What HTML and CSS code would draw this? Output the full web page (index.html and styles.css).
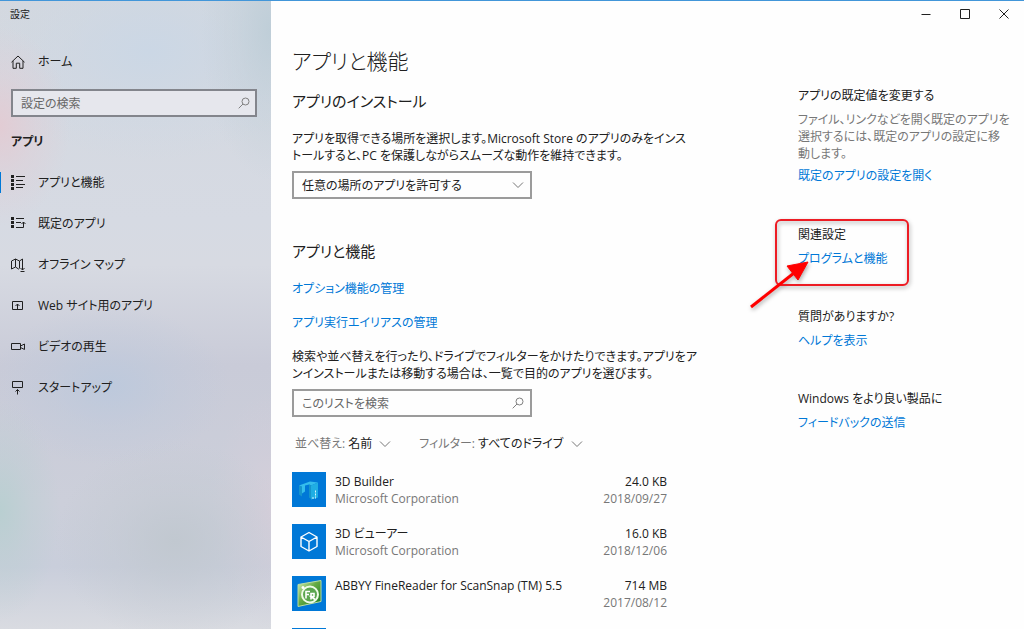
FILE: index.html
```
<!DOCTYPE html>
<html lang="ja">
<head>
<meta charset="utf-8">
<meta name="viewport" content="width=device-width, initial-scale=1">
<title>設定</title>
<link rel="stylesheet" href="styles.css">
</head>
<body>
<div class="window">
  <aside class="sidebar">
    <div class="window-title">設定</div>
    <a class="nav-link home" href="#">
      <svg class="icon" viewBox="0 0 16 16"><path d="M1.500 8.200 8 2l6.500 6.200M3 7v7.300h3.300V9.200h3.400v5.100H13V7"/></svg>
      <span>ホーム</span>
    </a>
    <label class="search side-search">
      <input type="search" placeholder="設定の検索" aria-label="設定の検索">
      <svg class="search-icon" viewBox="0 0 12 12"><circle cx="7.500" cy="4.500" r="3.500"/><path d="M5 7 .7 11.300"/></svg>
    </label>
    <h2 class="nav-title">アプリ</h2>
    <nav class="nav">
      <a class="nav-link current" href="#">
        <svg class="icon" viewBox="0 0 16 16"><path d="M6 1.500h9M6 5.500h7M6 9.500h9M6 12.500h7"/><path class="dots" d="M2.500 0v15"/></svg>
        <span>アプリと機能</span>
      </a>
      <a class="nav-link" href="#">
        <svg class="icon" viewBox="0 0 16 16"><path d="M6 2.500h8M6 6.500h5M6 11.500h7.500V6M11.500 8l2-2 2 2"/><path class="dots" d="M2.500 1v12"/></svg>
        <span>既定のアプリ</span>
      </a>
      <a class="nav-link" href="#">
        <svg class="icon" viewBox="0 0 16 16"><path d="M9.500 11.500 8.500 12l-3-2-4 2V4l4-2 4 2 3-2v6M5.500 2v8M9.500 4v7M12.500 6v7M10.500 11l2 2 2-2M10.500 14.500h4"/></svg>
        <span>オフライン マップ</span>
      </a>
      <a class="nav-link" href="#">
        <svg class="icon" viewBox="0 0 16 16"><path d="M2.500 3.500h10v8h-10zM7.500 11V6M5.500 8l2-2 2 2"/></svg>
        <span>Web サイト用のアプリ</span>
      </a>
      <a class="nav-link" href="#">
        <svg class="icon" viewBox="0 0 16 16"><path d="M1.500 4.500h9v6h-9zM10.500 7l4-2v5.500l-4-2"/></svg>
        <span>ビデオの再生</span>
      </a>
      <a class="nav-link" href="#">
        <svg class="icon" viewBox="0 0 16 16"><path d="M2.500 1.500h10v6h-10zM7.500 14.500v-5M5.500 11.500l2-2 2 2"/></svg>
        <span>スタートアップ</span>
      </a>
    </nav>
  </aside>

  <div class="page">
    <div class="caption">
      <button type="button" aria-label="最小化"><svg viewBox="0 0 10 10"><path d="M.5 5.500h9"/></svg></button>
      <button type="button" aria-label="最大化"><svg viewBox="0 0 10 10"><path d="M.5.500h9v9h-9z"/></svg></button>
      <button type="button" aria-label="閉じる"><svg viewBox="0 0 10 10"><path d="m.5.500 9 9m0-9-9 9"/></svg></button>
    </div>
    <div class="columns">
      <main class="content">
        <h1>アプリと機能</h1>
        <h2>アプリのインストール</h2>
        <p>アプリを取得できる場所を選択します。Microsoft Store のアプリのみをインス<br>トールすると、PC を保護しながらスムーズな動作を維持できます。</p>
        <div class="select-box">
          <select aria-label="アプリの入手元"><option>任意の場所のアプリを許可する</option></select>
          <svg class="chevron" viewBox="0 0 12 8"><path d="m1 1.500 5 5 5-5"/></svg>
        </div>
        <h2 class="features">アプリと機能</h2>
        <a class="link" href="#">オプション機能の管理</a>
        <a class="link" href="#">アプリ実行エイリアスの管理</a>
        <p>検索や並べ替えを行ったり、ドライブでフィルターをかけたりできます。アプリをア<br>ンインストールまたは移動する場合は、一覧で目的のアプリを選びます。</p>
        <label class="search list-search">
          <input type="search" placeholder="このリストを検索" aria-label="このリストを検索">
          <svg class="search-icon" viewBox="0 0 12 12"><circle cx="7.500" cy="4.500" r="3.500"/><path d="M5 7 .7 11.300"/></svg>
        </label>
        <div class="filters">
          <label class="filter">並べ替え:
            <select><option>名前</option></select>
            <svg class="chevron" viewBox="0 0 12 8"><path d="m1 1.500 5 5 5-5"/></svg>
          </label>
          <label class="filter">フィルター:
            <select><option>すべてのドライブ</option></select>
            <svg class="chevron" viewBox="0 0 12 8"><path d="m1 1.500 5 5 5-5"/></svg>
          </label>
        </div>
        <ul class="apps">
          <li>
            <svg class="tile" viewBox="0 0 34 34"><path fill="#1595cd" d="m7 13 3 1v10l-3-2z"/><path fill="#35bdec" d="m7 13 11-4 8 1-7 3-2-1-4 1v6l-3 2v-7z"/><path fill="#1595cd" d="m17 12 3 1v14l-3-2z"/><path fill="#20aee3" d="m19 13 7-3v15l-7 2z"/><path stroke="#d5f6ff" stroke-dasharray="2 1" d="M23.500 18v7M20 25.500h4"/></svg>
            <div class="app-name">3D Builder<small>Microsoft Corporation</small></div>
            <div class="app-size">24.0 KB<small>2018/09/27</small></div>
          </li>
          <li>
            <svg class="tile" viewBox="0 0 34 34"><path fill="none" stroke="#fff" stroke-width="1.400" stroke-linejoin="round" d="m17 8 8 4.500v9.500l-8 4.500L9 22v-9.500zM9 12.500l8 4.500 8-4.500M17 17v9.500"/></svg>
            <div class="app-name">3D ビューアー<small>Microsoft Corporation</small></div>
            <div class="app-size">16.0 KB<small>2018/12/06</small></div>
          </li>
          <li>
            <svg class="tile" viewBox="0 0 34 34">
              <defs><linearGradient id="green" x1="0" y1="0" x2="1" y2="1"><stop offset="0" stop-color="#d5eeb5"/><stop offset=".45" stop-color="#65ab45"/><stop offset="1" stop-color="#17751f"/></linearGradient></defs>
              <path fill="url(#green)" stroke="#b9dda4" d="m6 8 23-4v21L6 30z"/>
              <circle cx="18" cy="18" r="8" fill="#5ba650" stroke="#eefbe7" stroke-width="2"/>
              <circle cx="11" cy="11" r="1.500" fill="#fff"/>
              <path fill="none" stroke="#fff" stroke-width="1.600" d="M14 22v-7h4M14 18h3M19 23v-6h3v3h-3l4 3"/>
            </svg>
            <div class="app-name">ABBYY FineReader for ScanSnap (TM) 5.5</div>
            <div class="app-size">714 MB<small>2017/08/12</small></div>
          </li>
          <li><svg class="tile" viewBox="0 0 34 34"></svg></li>
        </ul>
      </main>

      <aside class="related">
        <section>
          <h3>アプリの既定値を変更する</h3>
          <p>ファイル、リンクなどを開く既定のアプリを<br>選択するには、既定のアプリの設定に移<br>動します。</p>
          <a class="link" href="#">既定のアプリの設定を開く</a>
        </section>
        <section class="marked">
          <h3>関連設定</h3>
          <a class="link" href="#">プログラムと機能</a>
          <svg class="annotation" viewBox="0 0 166 96"><rect x="28" y="5" width="132" height="65" rx="5"/><path class="shaft" d="m3 92 43-34"/><path class="head" d="m60 47-10 18-11-14z"/></svg>
        </section>
        <section>
          <h3>質問がありますか?</h3>
          <a class="link" href="#">ヘルプを表示</a>
        </section>
        <section>
          <h3>Windows をより良い製品に</h3>
          <a class="link" href="#">フィードバックの送信</a>
        </section>
      </aside>
    </div>
  </div>
</div>
</body>
</html>
```
FILE: styles.css
```
* { box-sizing: border-box; }

body {
  margin: 0;
  background: #fefefe;
  color: #202020;
  font-family: "Open Sans", "Noto Sans CJK JP", sans-serif;
  font-size: 12px;
  line-height: 17px;
  font-feature-settings: "palt";
}

h1, h2, h3, p, ul { margin: 0; padding: 0; }
h1, h2, h3 { font-weight: 400; }
h3 { font-size: 12px; }
a { color: inherit; text-decoration: none; }
svg { display: block; fill: none; stroke: currentColor; flex: none; }
input, select, button {
  margin: 0;
  padding: 0;
  border: 0;
  background: none;
  color: inherit;
  font: inherit;
  font-feature-settings: "palt";
  appearance: none;
}

.window {
  display: flex;
  height: 100vh;
  overflow: hidden;
  border-top: 1px solid #4296d9;
}

.sidebar {
  flex: none;
  width: 271px;
  background:
    radial-gradient(ellipse 70px 100px at 0 125px, #e2ccd4, #e2ccd466 50%, #e2ccd400),
    radial-gradient(ellipse 60px 110px at 0 510px, #b9cfd1, #b9cfd166 50%, #b9cfd100),
    radial-gradient(ellipse 120px 80px at 110px 385px, #bdc9dc, #bdc9dc66 50%, #bdc9dc00),
    radial-gradient(ellipse 70px 150px at 271px 30px, #bfced8, #bfced866 50%, #bfced800),
    radial-gradient(ellipse 170px 110px at 150px 50px, #cbd7e5, #cbd7e566 50%, #cbd7e500),
    radial-gradient(ellipse 120px 100px at 175px 540px, #c1c8d0, #c1c8d066 50%, #c1c8d000),
    radial-gradient(ellipse 60px 120px at 271px 510px, #d5ceda, #d5ceda66 50%, #d5ceda00),
    linear-gradient(#d3d8df 0, #d6dae3 35%, #d7dae2 42%, #c9cbd8 58%, #cccfda 80%, #c9cedb 90%, #d9dbe1 100%);
}

.window-title { padding: 5px 10px 0; font-size: 10px; }

.nav-link {
  display: flex;
  align-items: center;
  gap: 12px;
  height: 41px;
  padding-left: 10px;
}
.home { margin-top: 18px; }
.current { background: linear-gradient(#0078d7, #0078d7) no-repeat 0 50% / 1px 21px; }
.icon { width: 16px; height: 16px; }
.dots { stroke-width: 3; stroke-dasharray: 3 1; }

.search {
  display: flex;
  align-items: center;
  height: 28px;
  border: 2px solid #9b9b9b;
  padding: 0 6px 0 8px;
}
.search input { flex: 1; min-width: 0; outline: 0; }
.search input::placeholder { color: #666; opacity: 1; }
.search-icon { width: 12px; height: 12px; color: #808080; }
.side-search { margin: 7px 14px 0 11px; border-color: #83858c; background: #e6e7ed; padding-right: 5px; }

.nav-title { padding: 16px 11px 12px; font-size: 12px; font-weight: 700; }

.page { flex: 1; min-width: 0; }
.caption { display: flex; justify-content: flex-end; padding-right: 1px; }
.caption button { display: grid; place-items: center; width: 39px; height: 26px; }
.caption svg { width: 10px; height: 10px; }

.columns {
  display: flex;
  justify-content: space-between;
  padding: 18px 21px 0 21px;
}

.content { width: 384px; white-space: nowrap; }
h1 { font-size: 21px; line-height: 32px; font-weight: 300; }
.content h2 { font-size: 15px; line-height: 24px; margin-top: 12px; }
.content p { margin-top: 17px; }
.content .features { margin-top: 40px; }
.link { display: block; color: #0078d7; }
.content .link { margin-top: 17px; }
.content p + .search { margin-top: 7px; }

.select-box {
  position: relative;
  width: 240px;
  height: 28px;
  margin-top: 7px;
  border: 2px solid #9b9b9b;
}
.select-box select { width: 100%; height: 100%; padding-left: 8px; }
.select-box .chevron { position: absolute; right: 6px; top: 8px; }
.chevron { width: 12px; height: 8px; color: #777; }
.list-search { width: 240px; }

.filters { display: flex; gap: 28px; margin-top: 18px; padding-left: 3px; }
.filter { display: flex; align-items: center; gap: 3px; color: #777; }
.filter select { color: #202020; }
.filter .chevron { margin-left: 3px; }

.apps { display: grid; gap: 17px; margin-top: 20px; list-style: none; }
.apps li { display: flex; align-items: flex-end; height: 35px; }
.tile { width: 34px; height: 35px; margin-right: 9px; background: #0078d7; stroke: none; }
.app-name { flex: 1; height: 34px; }
.app-size { text-align: right; padding-right: 9px; }
.apps small { display: block; font-size: inherit; color: #777; }

.related { width: 205px; padding-top: 42px; white-space: nowrap; }
.related section { position: relative; height: 82px; }
.related section:first-child { height: 139px; }
.related p { margin-top: 7px; color: #777; }
.related .link { margin-top: 7px; }
.related p + .link { margin-top: 5px; }
.annotation {
  position: absolute;
  left: -50px;
  top: -11px;
  width: 166px;
  height: 96px;
  stroke: #ed1c24;
  stroke-width: 2;
  filter: drop-shadow(1px 2px 2px #0005);
}
.shaft { stroke: #f00; stroke-width: 3; }
.head { fill: #f00; stroke: #f00; stroke-width: 1; }
```
